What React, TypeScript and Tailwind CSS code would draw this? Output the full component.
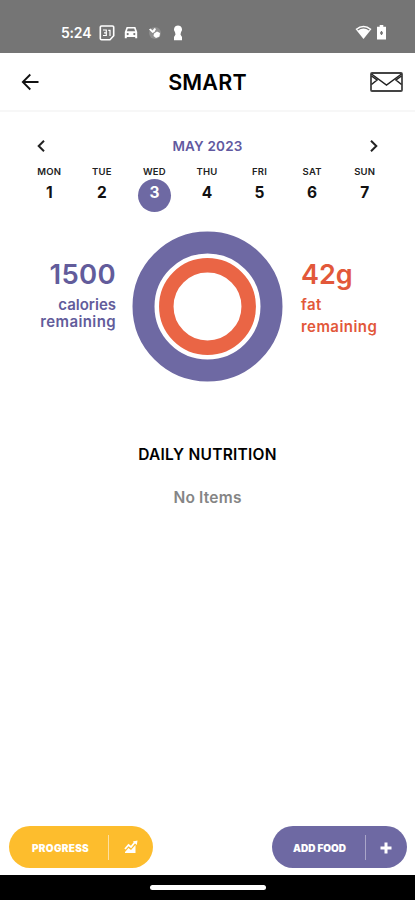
import React from "react";
import { clsx } from "clsx";

interface Day {
  name: string;
  date: number;
}

const days: Day[] = [
  { name: "MON", date: 1 },
  { name: "TUE", date: 2 },
  { name: "WED", date: 3 },
  { name: "THU", date: 4 },
  { name: "FRI", date: 5 },
  { name: "SAT", date: 6 },
  { name: "SUN", date: 7 },
];

const SELECTED_DATE = 3;

function StatusBar() {
  return (
    <div className="flex h-[53px] shrink-0 items-start bg-[#757575] pl-[61px] pr-[28px] pt-[24px] text-white">
      <span className="w-[38px] text-[14px] font-semibold leading-[17px] tracking-[-0.2px]">
        5:24
      </span>

      {/* Calendar */}
      <svg className="mt-px h-[16px] w-[16px]" viewBox="0 0 16 16" fill="none">
        <path d="M2.5 1h11a1.2 1.2 0 0 1 1.2 1.2v8.6L11 14.8H2.5a1.2 1.2 0 0 1-1.2-1.2V2.2A1.2 1.2 0 0 1 2.5 1z" stroke="#fff" strokeWidth="1.6" />
        <path d="M4 5h3.3v5.500H4M5 7.800h2.300M9.300 5.300H11v5.700" stroke="#fff" strokeWidth="1.200" />
      </svg>

      {/* Car */}
      <svg className="ml-[9px] mt-[2px] h-[14px] w-[14px]" viewBox="0 0 14 14">
        <path fillRule="evenodd" fill="#fff" d="M2.6 1h8.8l1.8 5v6.3h-2V11H2.8v1.3h-2V6zM3.8 2.5 2.9 5.2h8.2L10.200 2.500zM3.700 7a1.100 1.100 0 1 0 0 2.200 1.100 1.100 0 0 0 0-2.200zM10.300 7a1.100 1.100 0 1 0 0 2.200 1.100 1.100 0 0 0 0-2.200z" />
      </svg>

      <svg className="ml-[10px] mt-[2px] h-[14px] w-[14px]" viewBox="0 0 14 14">
        <circle cx="7" cy="7" r="6" fill="#8d8d8d" />
        <path d="M1 3.500 2.500 2.500 4.500 4.500 6.500 2l1.500 1-1.500 3-2 1z" fill="#fff" />
        <path d="M6 7.500 9 5.500l3 1.500-.5 3.500L8 12 5.500 10z" fill="#fff" />
      </svg>

      {/* Keyhole */}
      <svg className="ml-[11px] mt-px h-[16px] w-[10px]" viewBox="0 0 10 16">
        <path d="M5 .5a4 4 0 0 1 3 6.700L7.500 9.500 9 12v3.200H1V12l1.500-2.500L2 7.200A4 4 0 0 1 5 .5z" fill="#fff" />
      </svg>

      <div className="ml-auto flex">
        <svg className="mt-px h-[15px] w-[17px]" viewBox="0 0 17 15">
          <path d="M.5 4Q8.500-2.500 16.500 4L8.500 14z" fill="#fff" />
          <path d="M2.700 5Q8.500.8 14.300 5" stroke="#757575" strokeWidth="1.100" fill="none" />
        </svg>
        <svg className="ml-[5px] mr-px mt-px h-[15px] w-[9px]" viewBox="0 0 9 15">
          <path d="M2.700 0h3.600v1.700H9V14.500H0V1.700h2.700z" fill="#fff" />
          <path d="M4.500 6v4M3 8h3" stroke="#757575" strokeWidth="1.300" />
        </svg>
      </div>
    </div>
  );
}

function Header() {
  return (
    <header className="flex h-[59px] shrink-0 items-center justify-between border-b-2 border-[#f7f7f7] pl-[21px] pr-[12px]">
      <svg className="h-[18px] w-[33px]" viewBox="0 0 33 18" fill="none" stroke="#111" strokeWidth="1.800">
        <path d="M17.500 9H1.800M9.300 1.500 1.800 9l7.500 7.500" />
      </svg>
      <h1 className="mr-[9px] pt-px text-[21.500px] font-semibold leading-[28px] tracking-[0.2px] text-black">
        SMART
      </h1>
      <svg className="h-[20px] w-[33px]" viewBox="0 0 33 20" fill="none">
        <rect x="1" y="1" width="31" height="18" rx="1" stroke="#444" strokeWidth="1.800" />
        <path
          d="M1.500 2 16.500 13 31.500 2M1.500 4 7 8 1.500 12.500M31.500 4 26 8l5.500 4.500"
          stroke="#222"
          strokeWidth="1.500"
        />
      </svg>
    </header>
  );
}

function Calendar() {
  return (
    <section className="h-[119px] shrink-0 px-[23px] pt-[24px]">
      <div className="flex h-[20px] items-center justify-between px-[14px]">
        <svg className="h-[12px] w-[8px]" viewBox="0 0 8 12" fill="none" stroke="#222" strokeWidth="2">
          <path d="M7 .8 1.700 6 7 11.200" />
        </svg>
        <span className="pt-px text-[13.500px] font-semibold tracking-[0.2px] text-[#6159a0]">
          MAY 2023
        </span>
        <svg className="h-[12px] w-[8px]" viewBox="0 0 8 12" fill="none" stroke="#222" strokeWidth="2">
          <path d="M1 .8 6.300 6 1 11.200" />
        </svg>
      </div>

      <div className="mr-px mt-[10px] grid grid-cols-7 text-center">
        {days.map((day) => (
          <div key={day.name} className="flex flex-col items-center">
            <span className="text-[9.500px] font-semibold leading-[11px] tracking-[0.2px] text-[#222]">
              {day.name}
            </span>
            <span
              className={clsx(
                "mt-[2px] h-[33px] w-[33px] rounded-full pt-[4px] text-[15.500px] font-bold leading-[20px]",
                day.date === SELECTED_DATE ? "bg-[#6e69a3] text-white" : "text-[#111]"
              )}
            >
              {day.date}
            </span>
          </div>
        ))}
      </div>
    </section>
  );
}

function Summary() {
  return (
    <section className="flex h-[151px] shrink-0">
      {/* Calories */}
      <div className="w-[116px] pt-[27px] text-right text-[#625c9b]">
        <div className="text-[27.500px] font-semibold leading-[33px] tracking-[0.3px]">1500</div>
        <div className="mt-[5px] text-[15px] font-semibold leading-[17px]">
          <div>calories</div>
          <div className="tracking-[0.400px]">remaining</div>
        </div>
      </div>

      <svg className="ml-[16px] h-[151px] w-[151px]" viewBox="0 0 151 151" fill="none">
        <circle cx="75.500" cy="75.500" r="64" stroke="#6e69a3" strokeWidth="22" />
        <circle cx="75.500" cy="75.500" r="41.200" stroke="#ea6545" strokeWidth="14.500" />
      </svg>

      {/* Fat */}
      <div className="ml-[18px] pt-[27px] text-[#e2583a]">
        <div className="text-[27px] font-semibold leading-[33px]">42g</div>
        <div className="mt-[3px] text-[15px] font-semibold leading-[21.500px] tracking-[0.450px]">
          <div>fat</div>
          <div>remaining</div>
        </div>
      </div>
    </section>
  );
}

export default function App() {
  return (
    <div className="flex h-[900px] w-[415px] flex-col overflow-hidden bg-white font-['Inter',sans-serif]">
      <StatusBar />
      <Header />
      <Calendar />
      <Summary />

      <section className="flex-1 pt-[63px] text-center">
        <h2 className="text-[15.500px] font-semibold leading-[20px] tracking-[0.250px] text-black">
          DAILY NUTRITION
        </h2>
        <p className="mt-[23px] text-[15.500px] font-semibold leading-[20px] tracking-[0.200px] text-[#858585]">
          No Items
        </p>
      </section>

      {/* Actions */}
      <div className="mb-[7px] flex shrink-0 justify-between pl-[9px] pr-[8px] text-[10px] font-black text-white">
        <button className="flex h-[42px] w-[144px] items-center rounded-full bg-[#fdbd2d] pl-[23px]">
          <span className="w-[76px] pt-[3px] text-left tracking-[0.3px]">PROGRESS</span>
          <span className="h-[25px] w-px bg-[#fee0a0]" />
          <svg className="ml-[15px] h-[14px] w-[14px]" viewBox="0 0 14 14">
            <path d="M1 9l3.500-4L7 7l4-5" stroke="#fff" strokeWidth="1.800" fill="none" />
            <path d="M8.800 1.500 13.500.5l-.7 4.600zM1 12l3.500-4L7 10l4.500-5v8H1z" fill="#fff" />
          </svg>
        </button>
        <button className="flex h-[42px] w-[135px] items-center rounded-full bg-[#6e69a3] pl-[21px]">
          <span className="w-[72px] pt-[3px] text-left">ADD FOOD</span>
          <span className="h-[25px] w-px bg-[#aaa6c9]" />
          <svg className="ml-[14px] mt-px h-[12px] w-[12px]" viewBox="0 0 12 12" stroke="#fff" strokeWidth="3">
            <path d="M6 .5v11M.5 6h11" />
          </svg>
        </button>
      </div>

      {/* System navigation */}
      <div className="flex h-[25px] shrink-0 items-center justify-center bg-black">
        <div className="h-[5px] w-[116px] rounded-full bg-white" />
      </div>
    </div>
  );
}
